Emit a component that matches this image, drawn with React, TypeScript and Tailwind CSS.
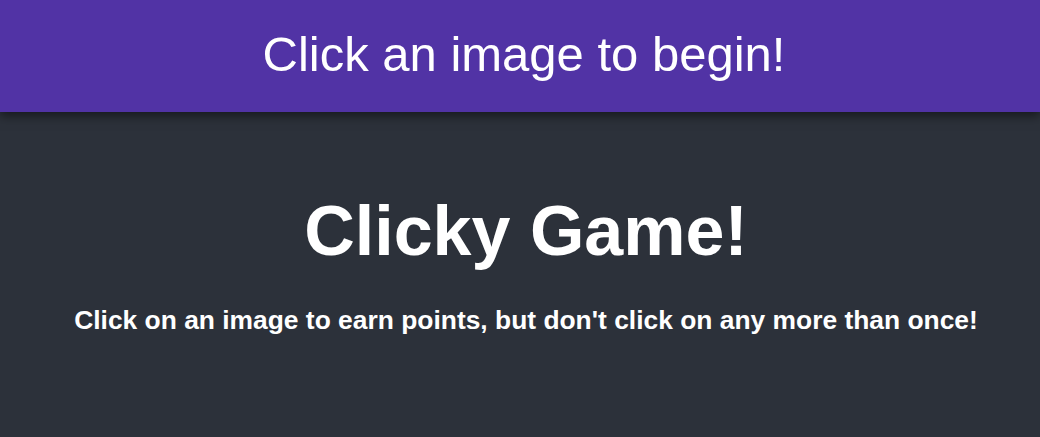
export default function App() {
  return (
    <div className="min-h-[437px] bg-[#2c313a] font-['Liberation_Sans',Arial,sans-serif] text-white">
      <header className="relative z-10 flex h-[112px] items-center justify-center bg-[#5133a5] pb-[4px] pl-[8px] shadow-[0_4px_10px_rgba(0,0,0,0.5)]">
        <h2 className="text-[49px] leading-none">Click an image to begin!</h2>
      </header>
      <main className="flex flex-col items-center pl-[12px] pt-[84px] text-center">
        <h1 className="text-[70px] font-bold leading-none">Clicky Game!</h1>
        <p className="mt-[41px] text-[26.4px] font-bold leading-none">
          Click on an image to earn points, but don't click on any more than once!
        </p>
      </main>
    </div>
  );
}
